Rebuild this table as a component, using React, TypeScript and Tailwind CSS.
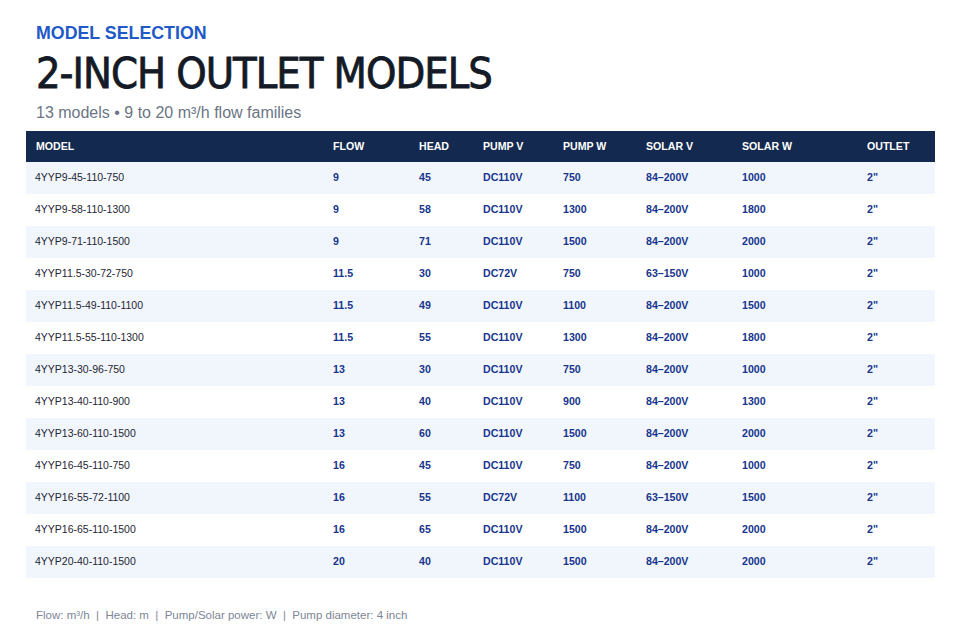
const rows = [
  ['4YYP9-45-110-750', '9', '45', 'DC110V', '750', '84–200V', '1000', '2"'],
  ['4YYP9-58-110-1300', '9', '58', 'DC110V', '1300', '84–200V', '1800', '2"'],
  ['4YYP9-71-110-1500', '9', '71', 'DC110V', '1500', '84–200V', '2000', '2"'],
  ['4YYP11.5-30-72-750', '11.5', '30', 'DC72V', '750', '63–150V', '1000', '2"'],
  ['4YYP11.5-49-110-1100', '11.5', '49', 'DC110V', '1100', '84–200V', '1500', '2"'],
  ['4YYP11.5-55-110-1300', '11.5', '55', 'DC110V', '1300', '84–200V', '1800', '2"'],
  ['4YYP13-30-96-750', '13', '30', 'DC110V', '750', '84–200V', '1000', '2"'],
  ['4YYP13-40-110-900', '13', '40', 'DC110V', '900', '84–200V', '1300', '2"'],
  ['4YYP13-60-110-1500', '13', '60', 'DC110V', '1500', '84–200V', '2000', '2"'],
  ['4YYP16-45-110-750', '16', '45', 'DC110V', '750', '84–200V', '1000', '2"'],
  ['4YYP16-55-72-1100', '16', '55', 'DC72V', '1100', '63–150V', '1500', '2"'],
  ['4YYP16-65-110-1500', '16', '65', 'DC110V', '1500', '84–200V', '2000', '2"'],
  ['4YYP20-40-110-1500', '20', '40', 'DC110V', '1500', '84–200V', '2000', '2"'],
]

const headers = ['MODEL', 'FLOW', 'HEAD', 'PUMP V', 'PUMP W', 'SOLAR V', 'SOLAR W', 'OUTLET']
const widths = ['w-[297px]', 'w-[86px]', 'w-[64px]', 'w-[80px]', 'w-[83px]', 'w-[96px]', 'w-[125px]', 'w-[78px]']

export default function App() {
  return (
    <div className="w-[960px] h-[640px] bg-white px-[26px] pt-[22px] font-['Liberation_Sans',Arial,sans-serif] overflow-hidden">
      <div className="px-[10px]">
        <div className="text-[17.8px] font-bold leading-[22px] text-[#2159c8]">MODEL SELECTION</div>
        <h1 className="mt-[5px] text-[43px] leading-[48px] text-[#141b26] font-['DejaVu_Sans_Condensed','DejaVu_Sans',sans-serif] font-normal tracking-[-1px] [-webkit-text-stroke:0.8px_#141b26]">
          2-INCH OUTLET MODELS
        </h1>
        <div className="mt-[6px] text-[16px] leading-[20px] text-[#6b7585]">13 models • 9 to 20 m³/h flow families</div>
      </div>

      <table className="mt-[8px] w-[909px] table-fixed border-collapse">
        <thead>
          <tr className="bg-[#13294f] h-[31px]">
            {headers.map((h, i) => (
              <th key={h} className={`${widths[i]} pl-[10px] text-left text-[10.6px] font-bold text-white`}>
                {h}
              </th>
            ))}
          </tr>
        </thead>
        <tbody>
          {rows.map((r, ri) => (
            <tr key={r[0]} className={`h-[32px] ${ri % 2 === 0 ? 'bg-[#f1f5fc]' : 'bg-white'}`}>
              {r.map((c, ci) => (
                <td
                  key={ci}
                  className={
                    ci === 0
                      ? 'pl-[9px] text-[10.5px] text-[#1f2633]'
                      : 'pl-[10px] text-[10.6px] font-bold text-[#17358c]'
                  }
                >
                  {c}
                </td>
              ))}
            </tr>
          ))}
        </tbody>
      </table>

      <div className="mt-[29px] px-[10px] text-[11.5px] text-[#7d8696] whitespace-pre">
        Flow: m³/h  |  Head: m  |  Pump/Solar power: W  |  Pump diameter: 4 inch
      </div>
    </div>
  )
}
